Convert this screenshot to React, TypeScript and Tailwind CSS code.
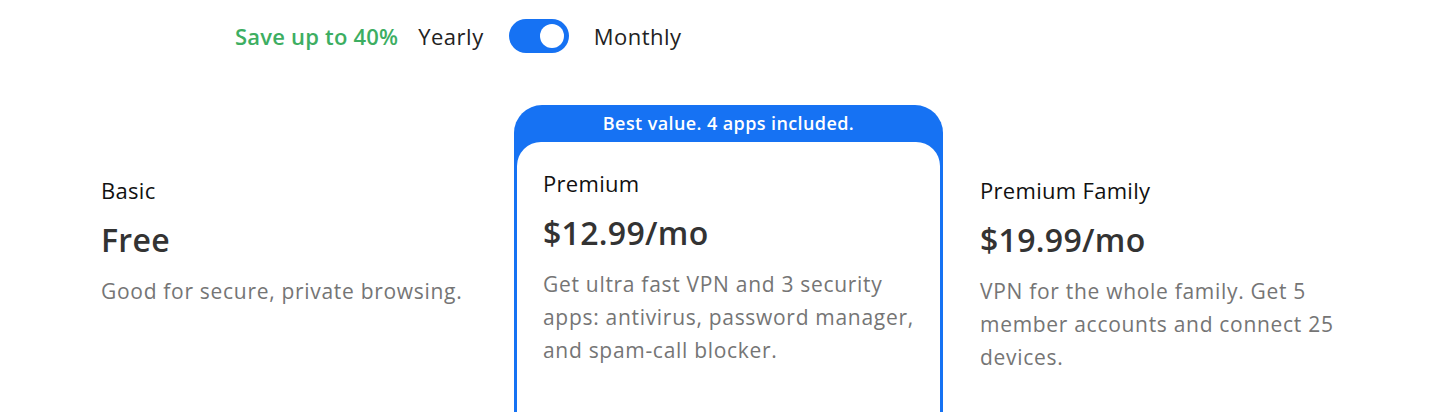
const PLANS = [
  {
    name: 'Basic',
    price: 'Free',
    desc: 'Good for secure, private browsing.',
  },
  {
    name: 'Premium',
    price: '$12.99/mo',
    desc: 'Get ultra fast VPN and 3 security apps: antivirus, password manager, and spam-call blocker.',
    badge: 'Best value. 4 apps included.',
  },
  {
    name: 'Premium Family',
    price: '$19.99/mo',
    desc: 'VPN for the whole family. Get 5 member accounts and connect 25 devices.',
  },
];

function PlanBody({ name, price, desc }: { name: string; price: string; desc: string }) {
  return (
    <div className="flex flex-col">
      <div className="text-[22px] leading-[28px] tracking-[0.3px] text-[#111]">{name}</div>
      <div className="mt-[17px] text-[32px] leading-[38px] tracking-[0.3px] font-semibold text-[#333]">{price}</div>
      <p className="mt-[16px] text-[21px] leading-[33px] tracking-[0.7px] text-[#757575]">{desc}</p>
    </div>
  );
}

export default function App() {
  return (
    <div className="w-[1440px] h-[412px] overflow-hidden bg-white" style={{ fontFamily: '"Open Sans", sans-serif' }}>
      {/* billing toggle */}
      <div className="flex items-center pl-[235px] pt-[19px] h-[53px] text-[22px] tracking-[0.5px]">
        <span className="font-semibold tracking-[0.2px] text-[#3dae62]">Save up to 40%</span>
        <span className="ml-5 text-[#222]">Yearly</span>
        <div className="ml-[25px] w-[60px] h-[34px] rounded-full bg-[#1672f3] flex items-center justify-end pr-[5px]">
          <div className="w-[24px] h-[24px] rounded-full bg-white" />
        </div>
        <span className="ml-[25px] text-[#222]">Monthly</span>
      </div>

      <div className="mt-[52px] grid grid-cols-[442px_429px_437px] pl-[72px]">
        <div className="pt-[71px] px-[29px]">
          <PlanBody {...PLANS[0]} />
        </div>

        <div className="rounded-t-[28px] bg-[#1672f3] px-[3px]">
          <div className="h-[37px] flex items-center justify-center text-white text-[18px] tracking-[0.4px] font-semibold">
            {PLANS[1].badge}
          </div>
          <div className="bg-white rounded-t-[24px] h-[300px] px-[26px] pt-[27px]">
            <PlanBody {...PLANS[1]} />
          </div>
        </div>

        <div className="pt-[71px] pl-[37px] pr-[29px]">
          <PlanBody {...PLANS[2]} />
        </div>
      </div>
    </div>
  );
}
